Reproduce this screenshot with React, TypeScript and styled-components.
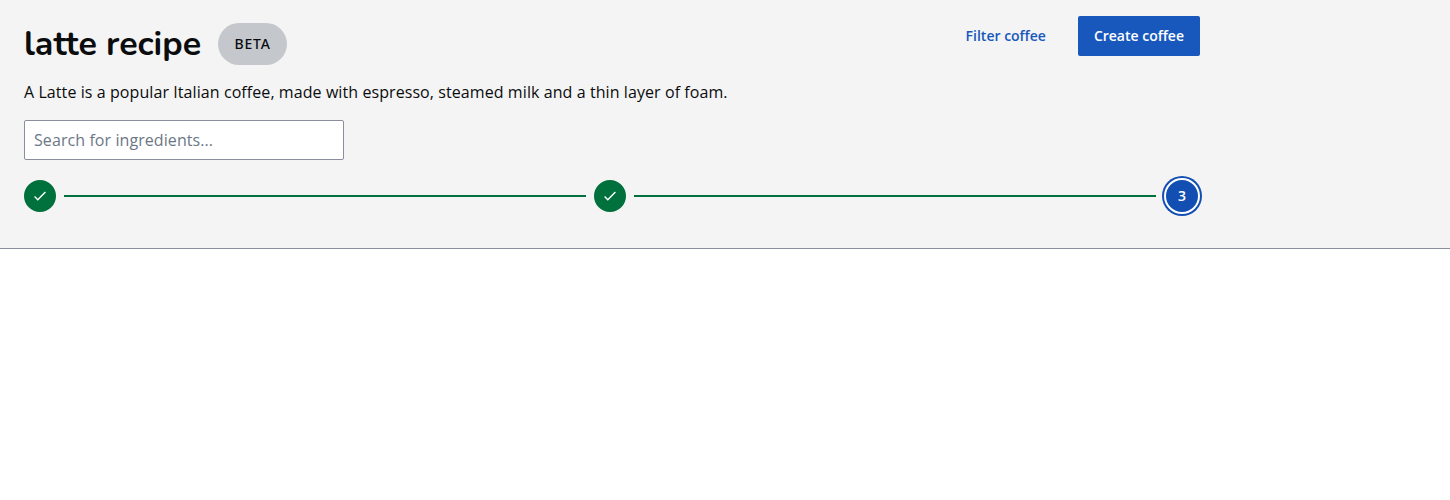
import React from 'react';
import styled, { createGlobalStyle } from 'styled-components';

const Global = createGlobalStyle`
  *, *::before, *::after { box-sizing: border-box; }
  body { margin: 0; background: #fff; color: #0b0c0e; font-family: "Open Sans", sans-serif; }
`;

const Header = styled.header`
  height: 249px;
  padding: 16px 0 0 24px;
  background: #f4f4f4;
  border-bottom: 1px solid #8b8e9c;
`;
const Content = styled.div`
  width: 1176px;
`;
const TopRow = styled.div`
  display: flex;
  justify-content: space-between;
  align-items: flex-start;
  height: 56px;
`;
const TitleGroup = styled.div`
  display: flex;
  align-items: center;
  gap: 17px;
  height: 56px;
`;
const Title = styled.h1`
  margin: 0;
  font-family: Nunito, "Nunito Sans", "Open Sans", sans-serif;
  font-size: 34px;
  line-height: 56px;
  font-weight: 700;
`;
const Tag = styled.span`
  height: 42px;
  padding: 0 16px 0 16.5px;
  border-radius: 21px;
  background: #c4c8cd;
  font-family: "Noto Sans", "Open Sans", sans-serif;
  font-size: 14px;
  line-height: 42px;
  font-weight: 500;
  letter-spacing: 0.75px;
`;
const Actions = styled.div`
  display: flex;
  gap: 16px;
`;
const Button = styled.button<{ $primary?: boolean }>`
  height: 40px;
  padding: 0 16px;
  border: 0;
  border-radius: 2px;
  background: ${p => (p.$primary ? '#1858bc' : 'transparent')};
  color: ${p => (p.$primary ? '#fff' : '#1858bc')};
  font: 600 14px/40px "Open Sans", sans-serif;
`;
const Description = styled.p`
  margin: 8px 0 16px;
  font-size: 16px;
  line-height: 24px;
  letter-spacing: 0.08px;
`;
const Search = styled.input`
  display: block;
  width: 320px;
  height: 40px;
  padding: 0 9px;
  border: 1px solid #8b8e9c;
  border-radius: 2px;
  background: #fff;
  font: 16px "Open Sans", sans-serif;
  letter-spacing: 0.08px;
  &::placeholder { color: #6c7786; opacity: 1; }
`;
const Steps = styled.div`
  display: flex;
  align-items: center;
  gap: 8px;
  height: 32px;
  margin-top: 20px;
`;
const Step = styled.div<{ $current?: boolean }>`
  display: flex;
  align-items: center;
  justify-content: center;
  width: ${p => (p.$current ? '36px' : '32px')};
  height: ${p => (p.$current ? '36px' : '32px')};
  flex: none;
  border: 2px solid ${p => (p.$current ? '#fff' : '#00703c')};
  border-radius: 50%;
  background: ${p => (p.$current ? '#134fb2' : '#00703c')};
  color: #fff;
  font-size: 14px;
  line-height: 20px;
  padding-bottom: ${p => (p.$current ? '1px' : '0')};
  font-weight: 600;
  box-shadow: ${p => (p.$current ? '0 0 0 2px #134fb2' : 'none')};
`;
const Line = styled.div`
  flex: 1;
  height: 2px;
  background: #00703c;
`;

const Check = () => (
  <svg width="16" height="16" viewBox="0 0 16 16" fill="none" stroke="#fff" strokeWidth="1.4">
    <path d="M2.6 8.5 5.8 11.7 13.4 4.1" />
  </svg>
);

export default function App() {
  return (
    <>
      <Global />
      <Header>
        <Content>
          <TopRow>
            <TitleGroup>
              <Title>latte recipe</Title>
              <Tag>BETA</Tag>
            </TitleGroup>
            <Actions>
              <Button>Filter coffee</Button>
              <Button $primary>Create coffee</Button>
            </Actions>
          </TopRow>
          <Description>A Latte is a popular Italian coffee, made with espresso, steamed milk and a thin layer of foam.</Description>
          <Search placeholder="Search for ingredients..." />
          <Steps>
            <Step><Check /></Step>
            <Line />
            <Step><Check /></Step>
            <Line />
            <Step $current>3</Step>
          </Steps>
        </Content>
      </Header>
    </>
  );
}
